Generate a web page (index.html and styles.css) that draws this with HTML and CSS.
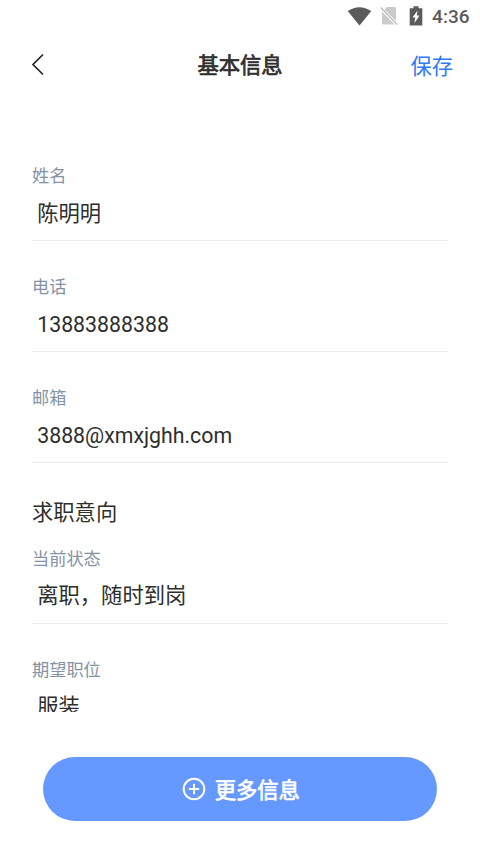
FILE: index.html
```html
<!DOCTYPE html>
<html lang="zh-CN">
<head>
<meta charset="utf-8">
<title>基本信息</title>
<link rel="stylesheet" href="styles.css">
</head>
<body>
<div class="status">
  <svg class="wifi" width="25" height="19" viewBox="0 0 25 19"><path d="M0.7 4Q12.5-3.6 24.3 4L12.5 18.6Z" fill="#5b5b5b"/></svg>
  <svg class="sim" width="18" height="20" viewBox="0 0 18 20"><path d="M6.700 1H14.500q1.500 0 1.500 1.500v12.800L4.500 3.400ZM2 5.500 14.600 18.500H3.500q-1.500 0-1.500-1.500Z" fill="#cbcbcb"/><path d="M.8 1.500 17.200 18.800" stroke="#bdbdbd" stroke-width="1.300"/></svg>
  <svg class="battery" width="14" height="20" viewBox="0 0 14 20"><path d="M4.500 .2h5v2H13.300v17.300H.7v-17.300h3.800Z" fill="#5b5b5b"/><path d="M8.500 4.500 7.800 9.500H10.500L5.500 17l.7-5.500H3.500Z" fill="#fff"/></svg>
  <span class="clock">4:36</span>
</div>
<header class="header">
  <svg class="back" width="14" height="24" viewBox="0 0 14 24"><path d="M12 1.500 2 11.500 12 21.500" fill="none" stroke="#222" stroke-width="1.700"/></svg>
  <h1 class="title">基本信息</h1>
  <span class="save">保存</span>
</header>
<main class="form">
  <div class="field"><div class="label">姓名</div><div class="value">陈明明</div></div>
  <div class="field"><div class="label">电话</div><div class="value">13883888388</div></div>
  <div class="field"><div class="label">邮箱</div><div class="value">3888@xmxjghh.com</div></div>
  <h2 class="section">求职意向</h2>
  <div class="field"><div class="label">当前状态</div><div class="value">离职，随时到岗</div></div>
  <div class="field"><div class="label">期望职位</div><div class="value">服装</div></div>
</main>
<footer class="footer">
  <button class="more"><svg width="24" height="24" viewBox="0 0 24 24" fill="none" stroke="#fff" stroke-width="2"><circle cx="12" cy="12" r="10.300"/><path d="M6.800 12h10.400M12 6.800v10.400"/></svg><span>更多信息</span></button>
</footer>
</body>
</html>
```
FILE: styles.css
```css
* { box-sizing: border-box; }
body { margin: 0; width: 480px; height: 853px; overflow: hidden; display: flex; flex-direction: column; background: #fff; color: #2e2e2e; font-family: Roboto, "Noto Sans CJK SC", sans-serif; }
.status { height: 32px; flex: none; display: flex; justify-content: flex-end; align-items: center; padding-right: 10.500px; }
.wifi { margin-right: 8px; }
.sim { margin-right: 11px; }
.battery { margin-right: 9px; }
.clock { font-size: 19px; line-height: 32px; padding-top: 1px; font-weight: 500; color: #5b5b5b; }
.header { height: 66px; flex: none; display: grid; grid-template-columns: 78px 1fr 82px; align-items: center; padding: 0 27px 0 31px; }
.title { margin: 0; padding-top: 1px; text-align: center; font-size: 21.300px; line-height: 32px; font-weight: 400; -webkit-text-stroke: 0.7px currentColor; }
.save { padding-top: 3px; text-align: right; font-size: 21.300px; line-height: 32px; color: #2f7bf6; }
.form { height: 614px; flex: none; overflow: hidden; padding: 61px 32px 0; }
.field { height: 82px; border-bottom: 1px solid #ececec; margin-bottom: 29.200px; }
.label { height: 34.500px; font-size: 17.200px; line-height: 34px; color: #8592a5; }
.value { height: 40px; padding-left: 5.200px; font-size: 21.300px; line-height: 40px; }
.section { margin: 33.200px 0 13px; font-size: 21.300px; line-height: 32px; font-weight: 400; }
.footer { margin-top: 45px; padding: 0 43px 0 42.500px; }
.more { width: 100%; height: 64px; border: 0; border-radius: 32px; background: #6699ff; color: #fff; display: flex; align-items: center; justify-content: center; gap: 9px; padding: 0 0 0 2px; font: 400 21.300px/32px "Noto Sans CJK SC", sans-serif; -webkit-text-stroke: 0.7px currentColor; }
```
